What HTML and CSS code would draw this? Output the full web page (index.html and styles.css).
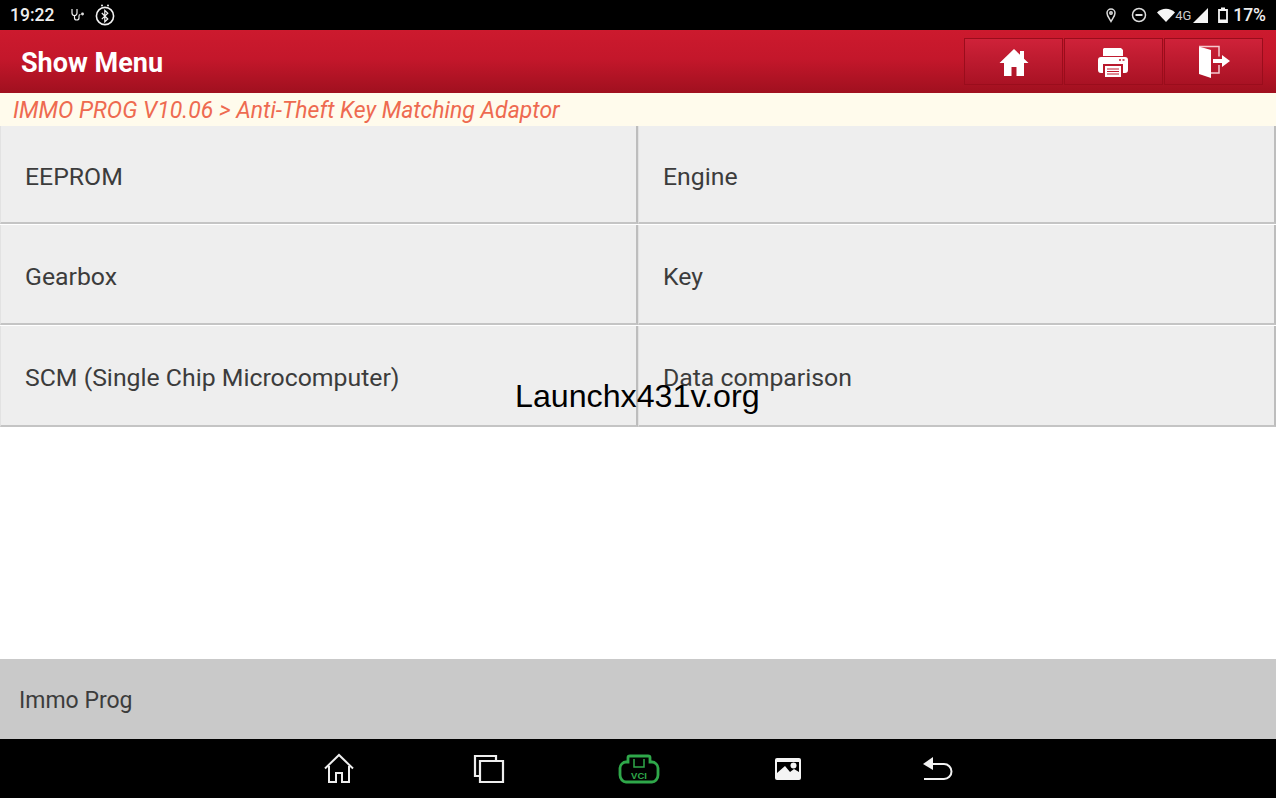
FILE: index.html
```html
<!DOCTYPE html>
<html lang="en">
<head>
    <meta charset="UTF-8">
    <meta name="viewport" content="width=device-width, initial-scale=1.0">
    <title>Show Menu</title>
    <link rel="stylesheet" href="styles.css">
</head>
<body>
    <div class="screen">
        <!-- Android status bar -->
        <div class="status-bar">
            <div class="status-left">
                <span class="clock">19:22</span>
                <svg class="icon-steth" width="16" height="16" viewBox="0 0 16 16" fill="none" stroke="#eee" stroke-width="1.2"><path d="M2 2v4c0 1.5 1 2.5 2.5 2.5S7 7.500 7 6V2"/><path d="M4.500 8.500v2.500c0 1.500 1 2 2.200 2s2.300-.5 2.300-2V9c0-1 .8-1.500 1.500-1.500"/><circle cx="12.500" cy="7" r=".8"/></svg>
                <svg class="icon-bt" width="22" height="22" viewBox="0 0 22 22" fill="none" stroke="#f2f2f2"><circle cx="11" cy="12" r="8.600" stroke-width="1.600"/><path d="M7.800 9l6 6-3 2.800V6.400l3 2.800-6 6" stroke-width="1.200"/><circle cx="8" cy="1.500" r="1" fill="#f2f2f2" stroke="none"/><circle cx="14" cy="1.500" r="1" fill="#f2f2f2" stroke="none"/></svg>
            </div>
            <div class="status-right">
                <svg width="12" height="16" viewBox="0 0 12 16" fill="none" stroke="#ddd" stroke-width="1.500"><path d="M6 14.500C4 11 2 9 2 6a4 4 0 0 1 8 0c0 3-2 5-4 8.500z"/><circle cx="6" cy="6" r="1.200"/></svg>
                <svg class="icon-dnd" width="16" height="16" viewBox="0 0 16 16" fill="none" stroke="#ddd" stroke-width="1.500"><circle cx="8" cy="8" r="6.500"/><path d="M4.500 8h7" stroke-width="2"/></svg>
                <svg class="icon-wifi" width="18" height="14" viewBox="0 0 18 14"><path d="M0 4.500C5 -.5 13 -.5 18 4.500L9 14z" fill="#f5f5f5"/></svg>
                <span class="net">4G</span>
                <svg width="16" height="15" viewBox="0 0 16 15"><path d="M16 0v15H1z" fill="#f5f5f5"/></svg>
                <svg class="icon-batt" width="10" height="16" viewBox="0 0 10 16"><path d="M1 3h8v12H1z" fill="none" stroke="#f5f5f5" stroke-width="1.800"/><path d="M3 .5h4V3H3z" fill="#f5f5f5"/><path d="M1 12.500h8V15H1z" fill="#f5f5f5"/></svg>
                <span class="batt">17%</span>
            </div>
        </div>

        <!-- Title bar -->
        <div class="title-bar">
            <div class="title">Show Menu</div>
            <div class="tools">
                <div class="tool">
                    <svg width="30" height="30" viewBox="0 0 30 30"><path d="M15 2L0.500 16H5v13h7.500v-9h5v9H25V16h4.500L25 11.700V4h-4v3.800z" fill="#fff"/></svg>
                </div>
                <div class="tool tool-print">
                    <svg width="32" height="32" viewBox="0 0 32 32"><path d="M7 2h17l2 2v6H6V3z" fill="#fff"/><path d="M4 11h24a3 3 0 0 1 3 3v10a3 3 0 0 1-3 3h-2v-9H6v9H4a3 3 0 0 1-3-3V14a3 3 0 0 1 3-3z" fill="#fff"/><path d="M8 20h16v11H8z" fill="#fff"/><path d="M10 23h12M10 25.500h12M10 28h12" stroke="#c0182c" stroke-width="1"/><path d="M22 14h2M25.500 14h2" stroke="#c0182c" stroke-width="1.500"/></svg>
                </div>
                <div class="tool">
                    <svg width="34" height="34" viewBox="0 0 34 34"><path d="M2 1.500l12 3.500v28L2 29z" fill="#fff"/><path d="M2 1.500h20v10M22 20v8H14" fill="none" stroke="#f6c9cf" stroke-width="1.500"/><path d="M16 14h9v-4l8 6-8 6v-4h-9z" fill="#fff"/></svg>
                </div>
            </div>
        </div>

        <div class="crumb">IMMO PROG V10.06 &gt; Anti-Theft Key Matching Adaptor</div>

        <!-- Menu grid -->
        <div class="menu">
            <div class="menu-item">EEPROM</div>
            <div class="menu-item">Engine</div>
            <div class="menu-item">Gearbox</div>
            <div class="menu-item">Key</div>
            <div class="menu-item row-last">SCM (Single Chip Microcomputer)</div>
            <div class="menu-item row-last">Data comparison</div>
        </div>
        <div class="watermark">Launchx431v.org</div>

        <div class="spacer"></div>
        <div class="footer">Immo Prog</div>

        <!-- Android nav bar -->
        <div class="nav-bar">
            <svg class="nav-home" width="32" height="32" viewBox="0 0 32 32" fill="none" stroke="#eee" stroke-width="2"><path d="M2 15.500L16 2l14 13.500"/><path d="M6 13v16h7v-9h6v9h7V13"/></svg>
            <svg class="nav-recent" width="32" height="32" viewBox="0 0 32 32" fill="none" stroke="#eee" stroke-width="2.200"><path d="M6 23H2V3h21v5"/><path d="M7 8h23v21H7z"/></svg>
            <svg class="nav-vci" width="42" height="30" viewBox="0 0 42 30" fill="none" stroke="#2fa84a" stroke-width="2.800"><path d="M10 8V3.500C10 2.500 11 2 12 2h18c1 0 2 .5 2 1.500V8h2c3 0 6 3 6 6v7c0 4-3 7-6 7H8c-3 0-6-3-6-7v-7c0-3 3-6 6-6z"/><path d="M16 5v8h10V5" stroke-width="1.500"/><text x="21" y="24.500" class="vci-text">VCI</text></svg>
            <svg class="nav-gallery" width="28" height="24" viewBox="0 0 28 24"><path d="M3 1h22a2 2 0 0 1 2 2v18a2 2 0 0 1-2 2H3a2 2 0 0 1-2-2V3a2 2 0 0 1 2-2z" fill="#f4f4f4"/><path d="M3 16V5h22v10l-5-3-4 3-5-6z" fill="#000"/><circle cx="19.500" cy="8.500" r="3" fill="#f4f4f4"/></svg>
            <svg class="nav-back" width="32" height="28" viewBox="0 0 32 28" fill="none" stroke="#f2f2f2" stroke-width="2"><path d="M6 9h17a7 7 0 0 1 0 15H3"/><path d="M12 2L2 9l10 6z" fill="#f2f2f2" stroke="none"/></svg>
        </div>
    </div>
</body>
</html>
```

FILE: styles.css
```css
* {
    box-sizing: border-box;
}
html, body {
    margin: 0;
    height: 100%;
}
body {
    font-family: Roboto, "Liberation Sans", sans-serif;
    background-color: #fff;
    overflow: hidden;
}
.screen {
    position: relative;
    display: flex;
    flex-direction: column;
    height: 798px;
}
.status-bar {
    height: 30px;
    flex: none;
    background-color: #000;
    color: #eee;
    display: flex;
    justify-content: space-between;
    align-items: center;
    padding: 0 10px 0 10px;
}
.status-left, .status-right {
    display: flex;
    align-items: center;
}
.clock {
    font-size: 17.5px;
    font-weight: 500;
    width: 60px;
}
.icon-bt {
    margin-left: 8px;
}
.icon-dnd {
    margin-left: 14px;
}
.icon-wifi {
    margin-left: 10px;
}
.net {
    font-size: 13px;
    color: #ccc;
    margin-right: 1px;
    width: 16px;
}
.icon-batt {
    margin-left: 10px;
}
.batt {
    font-size: 17.5px;
    font-weight: 500;
    margin-left: 5px;
}
.title-bar {
    height: 63px;
    flex: none;
    background: linear-gradient(#cc1a2e 0%, #c4172b 45%, #a0101f 100%);
    display: flex;
    justify-content: space-between;
    align-items: flex-start;
    padding: 8px 13px 0 21px;
}
.title {
    color: #fff;
    font-size: 27px;
    font-weight: 700;
    line-height: 50px;
}
.tools {
    display: flex;
    gap: 1px;
}
.tool {
    width: 99px;
    height: 47px;
    background: linear-gradient(#cf2239, #a91224);
    border: 1px solid #9a0d1c;
    display: flex;
    align-items: center;
    justify-content: center;
}
.tool-print {
    padding-right: 2px;
}
.crumb {
    height: 33px;
    flex: none;
    background-color: #fffbec;
    color: #ee6a50;
    font-size: 23px;
    font-style: italic;
    line-height: 36px;
    padding-left: 13px;
    white-space: nowrap;
}
.menu {
    display: grid;
    grid-template-columns: 638px 638px;
    grid-template-rows: 99px 101px 102px;
    flex: none;
}
.menu-item {
    background-color: #eeeeee;
    border-right: 2px solid #bdbdbd;
    border-bottom: 2px solid #c4c4c4;
    border-left: 1px solid #e2e2e2;
    margin-bottom: 1px;
    color: #3c3c3c;
    font-size: 24.8px;
    display: flex;
    align-items: center;
    padding-left: 24px;
    padding-top: 5px;
}
.row-last {
    padding-top: 3px;
}
.watermark {
    position: absolute;
    left: 515px;
    top: 377px;
    color: #000;
    font-family: "Liberation Sans", sans-serif;
    font-size: 32.2px;
    line-height: 38px;
}
.spacer {
    flex: 1;
}
.footer {
    height: 80px;
    flex: none;
    background-color: #c9c9c9;
    color: #3c3c3c;
    font-size: 23px;
    line-height: 84px;
    padding-left: 19px;
}
.nav-bar {
    height: 59px;
    flex: none;
    background-color: #000;
    display: flex;
    align-items: center;
    padding-left: 323px;
}
.nav-recent {
    margin-left: 118px;
}
.nav-vci {
    margin-left: 113px;
}
.nav-gallery {
    margin-left: 114px;
}
.nav-back {
    margin-left: 119px;
}
.vci-text {
    fill: #2fa84a;
    stroke: none;
    font-family: "Liberation Sans", sans-serif;
    font-size: 9.500px;
    font-weight: 700;
    text-anchor: middle;
}
```
